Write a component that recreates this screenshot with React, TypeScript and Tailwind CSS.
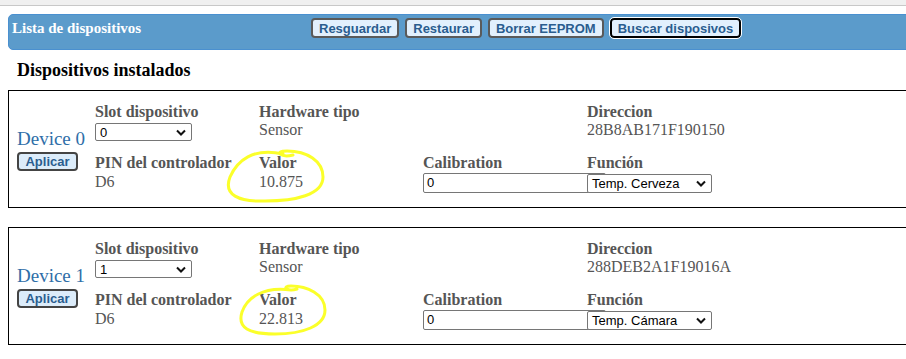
import React from 'react';

type Device = {
  name: string;
  slot: string;
  hw: string;
  pin: string;
  valor: string;
  calib: string;
  dir: string;
  fn: string;
  ring: string;
};

const devices: Device[] = [
  {
    name: 'Device 0',
    slot: '0',
    hw: 'Sensor',
    pin: 'D6',
    valor: '10.875',
    calib: '0',
    dir: '28B8AB171F190150',
    fn: 'Temp. Cerveza',
    ring: 'M274 63 C 244 56, 228 70, 221 86 C 214 104, 230 111, 256 110 C 286 110, 314 104, 314 86 C 314 70, 298 60, 278 60 C 264 60, 272 67, 284 64',
  },
  {
    name: 'Device 1',
    slot: '1',
    hw: 'Sensor',
    pin: 'D6',
    valor: '22.813',
    calib: '0',
    dir: '288DEB2A1F19016A',
    fn: 'Temp. Cámara',
    ring: 'M282 62 C 254 58, 238 70, 233 84 C 228 100, 240 106, 266 106 C 294 106, 316 98, 316 82 C 316 66, 298 58, 282 58 C 272 58, 278 64, 288 61',
  },
];

const serif = { fontFamily: '"Liberation Serif", "Times New Roman", serif' };
const sans = { fontFamily: '"Liberation Sans", Arial, sans-serif' };

const TopButton = ({ label, focused }: { label: string; focused?: boolean }) => (
  <button
    style={sans}
    className={`h-[20px] px-[6px] rounded-[4px] bg-[#e2f0fd] text-[13px] font-bold text-[#2a5d8f] leading-none border-2 ${
      focused ? 'border-black outline outline-1 outline-white' : 'border-[#5a5a5a]'
    }`}
  >
    {label}
  </button>
);

const Field = ({ label, children }: { label?: string; children?: React.ReactNode }) => (
  <div className="flex flex-col text-[#555]">
    {label && <div className="font-bold text-[16px] leading-[18px] whitespace-nowrap">{label}</div>}
    {children}
  </div>
);

const Select = ({ value, w }: { value: string; w: string }) => (
  <div
    style={sans}
    className={`${w} relative z-10 flex items-center justify-between border border-[#767676] bg-white rounded-[2px] pl-[4px] pr-[5px] text-[13px] text-black`}
  >
    <span className="leading-none">{value}</span>
    <svg width="10" height="7" viewBox="0 0 10 7">
      <path d="M1 1.5 L5 5.5 L9 1.5" fill="none" stroke="#111" strokeWidth="2" />
    </svg>
  </div>
);

const DeviceBox = ({ d }: { d: Device }) => (
  <div className="relative border border-black w-[1000px] pl-[8px] pt-[12px] pb-[14px] flex" style={serif}>
    <div className="w-[78px] flex flex-col items-start justify-center pt-[2px]">
      <div className="text-[19px] leading-[22px] text-[#2e6ea8]">{d.name}</div>
      <button
        style={sans}
        className="mt-[2px] h-[19px] w-[61px] rounded-[4px] border-2 border-[#444] bg-[#dcecfa] text-[13px] font-bold text-[#2a5d8f] leading-none"
      >
        Aplicar
      </button>
    </div>
    <div className="grid grid-cols-[164px_164px_164px_164px] grid-rows-[38px_39px] gap-y-[13px]">
      <Field label="Slot dispositivo">
        <Select value={d.slot} w="w-[97px] h-[18px] mt-[2px]" />
      </Field>
      <Field label="Hardware tipo">
        <div className="text-[16px] leading-[18px]">{d.hw}</div>
      </Field>
      <Field />
      <Field label="Direccion">
        <div className="text-[16px] leading-[18px]">{d.dir}</div>
      </Field>
      <Field label="PIN del controlador">
        <div className="text-[16px] leading-[18px] mt-[1px]">{d.pin}</div>
      </Field>
      <Field label="Valor">
        <div className="text-[16px] leading-[18px] mt-[1px]">{d.valor}</div>
      </Field>
      <Field label="Calibration">
        <div
          style={sans}
          className="w-[183px] h-[20px] mt-[1px] border border-[#767676] rounded-[2px] bg-white pl-[3px] text-[13px] text-black flex items-center"
        >
          {d.calib}
        </div>
      </Field>
      <Field label="Función">
        <Select value={d.fn} w="w-[125px] h-[19px] mt-[2px]" />
      </Field>
    </div>
    <svg className="absolute left-0 top-0 pointer-events-none" width="400" height="118" viewBox="0 0 400 118">
      <path d={d.ring} fill="none" stroke="#fbff2a" strokeWidth="3" strokeLinecap="round" />
    </svg>
  </div>
);

export default function App() {
  return (
    <div className="w-[906px] h-[359px] overflow-hidden bg-white">
      <div className="h-[6px] bg-[#f0f0f0] border-b border-[#c8c8c8]" />
      <div className="pl-[8px] pt-[8px]">
        <div className="w-[1000px] h-[36px] bg-[#5b9bcb] border border-[#4a90d0] rounded-l-[5px] flex items-center">
          <div style={serif} className="pl-[3px] w-[300px] text-white font-bold text-[15px] leading-none -mt-[7px]">
            Lista de dispositivos
          </div>
          <div className="flex gap-[6px] -mt-[8px] ml-[2px]">
            <TopButton label="Resguardar" />
            <TopButton label="Restaurar" />
            <TopButton label="Borrar EEPROM" />
            <TopButton label="Buscar disposivos" focused />
          </div>
        </div>
        <div style={serif} className="pl-[9px] pt-[10px] pb-[9px] text-[18px] font-bold leading-[21px] text-black">
          Dispositivos instalados
        </div>
        <div className="flex flex-col gap-[19px]">
          {devices.map((d) => (
            <DeviceBox key={d.name} d={d} />
          ))}
        </div>
      </div>
    </div>
  );
}
